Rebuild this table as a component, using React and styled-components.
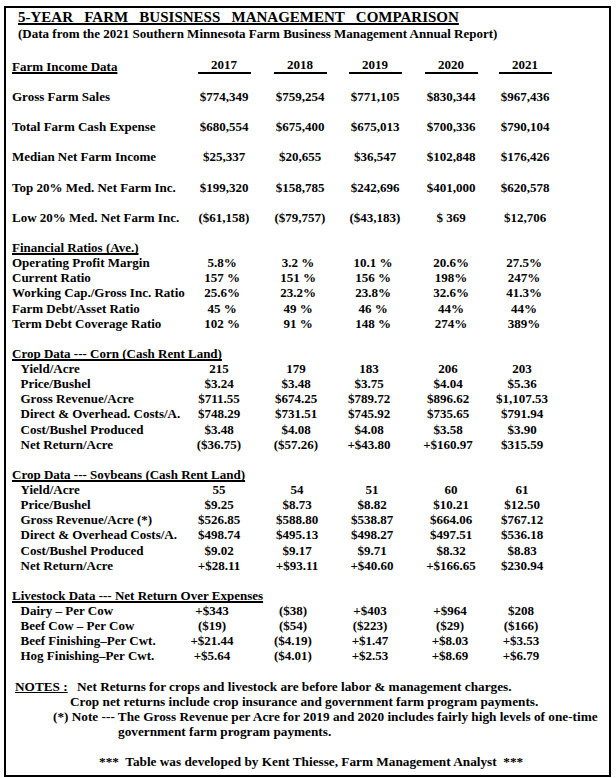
import React from 'react';
import styled, { createGlobalStyle } from 'styled-components';

const GlobalStyle = createGlobalStyle`
  html, body {
    margin: 0;
    padding: 0;
    background: #fff;
  }
  body {
    font-family: 'Liberation Serif', 'Times New Roman', serif;
    color: #000;
  }
`;

const LINE = 15.13;

const Page = styled.div`
  width: 616px;
  height: 778px;
  padding: 6px 5px 0 4px;
  box-sizing: border-box;
`;

const Frame = styled.div`
  height: 771px;
  border: 2px solid #000;
  box-sizing: border-box;
  padding-left: 6px;
  font-weight: bold;
  font-size: 13px;
  line-height: ${LINE}px;
`;

const Title = styled.div`
  padding-left: 6px;
  font-size: 15px;
  line-height: 18px;
  word-spacing: 7.5px;
  span {
    text-decoration: underline;
    text-decoration-thickness: 2px;
    text-decoration-skip-ink: none;
  }
`;

const Subtitle = styled.div`
  padding-left: 6px;
  font-size: 13px;
  line-height: ${LINE}px;
`;

const Row = styled.div`
  display: grid;
  grid-template-columns: ${(p) => p.$cols};
  margin-top: ${(p) => (p.$spaced ? `${LINE}px` : '0')};
`;

const Label = styled.div`
  padding-left: ${(p) => (p.$indent ? '8.5px' : '0')};
  white-space: nowrap;
`;

const Cell = styled.div`
  display: flex;
  justify-content: center;
  white-space: pre;
`;

const Underlined = styled.span`
  text-decoration: underline;
  text-decoration-thickness: 2px;
  text-decoration-skip-ink: none;
  text-underline-offset: 1px;
`;

const YearTag = styled.span`
  display: inline-block;
  width: 53px;
  text-align: center;
  line-height: 12px;
  border-bottom: 2px solid #000;
`;

const Section = styled.section`
  margin-top: ${(p) => p.$top}px;
`;

const Notes = styled(Section)`
  font-size: 13.25px;
`;

const NoteLine = styled.div`
  padding-left: ${(p) => p.$indent}px;
  white-space: nowrap;
  margin-top: ${(p) => (p.$gap ? `${LINE}px` : '0')};
`;

const NoteTag = styled(Underlined)`
  display: inline-block;
  width: 62px;
  text-decoration-thickness: 1px;
`;

const INCOME_COLS = '173px 78px 74px 76px 76px 72px';
const RATIO_COLS = '173px 74px 78px 72px 84px 62px';
const CORN_COLS = '173px 68px 86px 60px 98px 50px';
const SOY_COLS = '173px 68px 88px 62px 96px 46px';
const STOCK_COLS = '173px 54px 108px 46px 114px 28px';

const years = ['2017', '2018', '2019', '2020', '2021'];

const income = [
  ['Gross Farm Sales', '$774,349', '$759,254', '$771,105', '$830,344', '$967,436'],
  ['Total Farm Cash Expense', '$680,554', '$675,400', '$675,013', '$700,336', '$790,104'],
  ['Median Net Farm Income', '$25,337', '$20,655', '$36,547', '$102,848', '$176,426'],
  ['Top 20% Med. Net Farm Inc.', '$199,320', '$158,785', '$242,696', '$401,000', '$620,578'],
  ['Low 20% Med. Net Farm Inc.', '($61,158)', '($79,757)', '($43,183)', '$ 369', '$12,706'],
];

const ratios = [
  ['Operating Profit Margin', '5.8%', '3.2 %', '10.1 %', '20.6%', '27.5%'],
  ['Current Ratio', '157 %', '151 %', '156 %', '198%', '247%'],
  ['Working Cap./Gross Inc. Ratio', '25.6%', '23.2%', '23.8%', '32.6%', '41.3%'],
  ['Farm Debt/Asset Ratio', '45 %', '49 %', '46 %', '44%', '44%'],
  ['Term Debt Coverage Ratio', '102 %', '91 %', '148 %', '274%', '389%'],
];

const corn = [
  ['Yield/Acre', '215', '179', '183', '206', '203'],
  ['Price/Bushel', '$3.24', '$3.48', '$3.75', '$4.04', '$5.36'],
  ['Gross Revenue/Acre', '$711.55', '$674.25', '$789.72', '$896.62', '$1,107.53'],
  ['Direct & Overhead. Costs/A.', '$748.29', '$731.51', '$745.92', '$735.65', '$791.94'],
  ['Cost/Bushel Produced', '$3.48', '$4.08', '$4.08', '$3.58', '$3.90'],
  ['Net Return/Acre', '($36.75)', '($57.26)', '+$43.80', '+$160.97', '$315.59'],
];

const soybeans = [
  ['Yield/Acre', '55', '54', '51', '60', '61'],
  ['Price/Bushel', '$9.25', '$8.73', '$8.82', '$10.21', '$12.50'],
  ['Gross Revenue/Acre (*)', '$526.85', '$588.80', '$538.87', '$664.06', '$767.12'],
  ['Direct & Overhead Costs/A.', '$498.74', '$495.13', '$498.27', '$497.51', '$536.18'],
  ['Cost/Bushel Produced', '$9.02', '$9.17', '$9.71', '$8.32', '$8.83'],
  ['Net Return/Acre', '+$28.11', '+$93.11', '+$40.60', '+$166.65', '$230.94'],
];

const livestock = [
  ['Dairy – Per Cow', '+$343', '($38)', '+$403', '+$964', '$208'],
  ['Beef Cow – Per Cow', '($19)', '($54)', '($223)', '($29)', '($166)'],
  ['Beef Finishing–Per Cwt.', '+$21.44', '($4.19)', '+$1.47', '+$8.03', '+$3.53'],
  ['Hog Finishing–Per Cwt.', '+$5.64', '($4.01)', '+$2.53', '+$8.69', '+$6.79'],
];

const DataRows = ({ rows, cols, indent, spaced }) =>
  rows.map(([label, ...values]) => (
    <Row key={label} $cols={cols} $spaced={spaced}>
      <Label $indent={indent}>{label}</Label>
      {values.map((v, i) => (
        <Cell key={i}>{v}</Cell>
      ))}
    </Row>
  ));

const DataSection = ({ heading, rows, cols, indent }) => (
  <Section $top={LINE}>
    <div>
      <Underlined>{heading}</Underlined>
    </div>
    <DataRows rows={rows} cols={cols} indent={indent} />
  </Section>
);

export default function App() {
  return (
    <Page>
      <GlobalStyle />
      <Frame>
        <Title>
          <span>5-YEAR FARM BUSISNESS MANAGEMENT COMPARISON</span>
        </Title>
        <Subtitle>
          (Data from the 2021 Southern Minnesota Farm Business Management Annual Report)
        </Subtitle>

        <Section $top={17.4}>
          <Row $cols={INCOME_COLS}>
            <Label>
              <Underlined>Farm Income Data</Underlined>
            </Label>
            {years.map((y) => (
              <Cell key={y}>
                <YearTag>{y}</YearTag>
              </Cell>
            ))}
          </Row>
          <DataRows rows={income} cols={INCOME_COLS} spaced />
        </Section>

        <DataSection heading="Financial Ratios (Ave.)" rows={ratios} cols={RATIO_COLS} />
        <DataSection heading="Crop Data --- Corn (Cash Rent Land)" rows={corn} cols={CORN_COLS} indent />
        <DataSection heading="Crop Data --- Soybeans (Cash Rent Land)" rows={soybeans} cols={SOY_COLS} indent />
        <DataSection heading="Livestock Data --- Net Return Over Expenses" rows={livestock} cols={STOCK_COLS} indent />

        <Notes $top={LINE}>
          <NoteLine $indent={3}>
            <NoteTag>NOTES :</NoteTag>
            Net Returns for crops and livestock are before labor &amp; management charges.
          </NoteLine>
          <NoteLine $indent={58}>
            Crop net returns include crop insurance and government farm program payments.
          </NoteLine>
          <NoteLine $indent={41}>
            (*) Note --- The Gross Revenue per Acre for 2019 and 2020 includes fairly high levels of one-time
          </NoteLine>
          <NoteLine $indent={106}>government farm program payments.</NoteLine>
          <NoteLine $indent={87} $gap>
            ***&nbsp; Table was developed by Kent Thiesse, Farm Management Analyst &nbsp;***
          </NoteLine>
        </Notes>
      </Frame>
    </Page>
  );
}
